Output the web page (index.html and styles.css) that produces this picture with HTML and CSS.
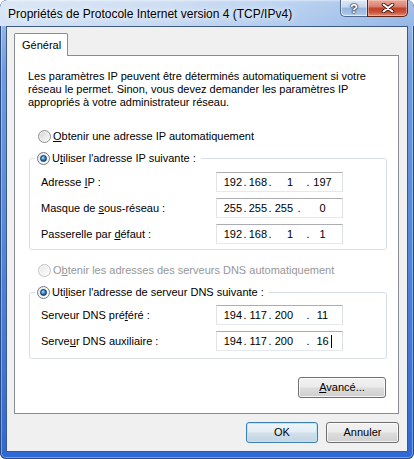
FILE: index.html
```html
<!DOCTYPE html>
<html lang="fr">
<head>
<meta charset="utf-8">
<title>Propriétés de Protocole Internet version 4 (TCP/IPv4)</title>
<link rel="stylesheet" href="styles.css">
</head>
<body>
<div class="window">
  <div class="titlebar">
    <div class="title">Propriétés de Protocole Internet version 4 (TCP/IPv4)</div>
    <div class="caption-btns">
      <div class="cbtn help">?</div>
      <div class="cbtn close">
        <svg width="14" height="10" viewBox="0 0 14 10">
          <path d="M2.5 1.5 L11.5 8.5 M11.5 1.5 L2.5 8.5" stroke="#3a1810" stroke-width="3.6" stroke-linecap="round" fill="none"/>
          <path d="M2.5 1.5 L11.5 8.5 M11.5 1.5 L2.5 8.5" stroke="#ffffff" stroke-width="2" stroke-linecap="round" fill="none"/>
        </svg>
      </div>
    </div>
  </div>
  <div class="client">
    <div class="tabs"><div class="tab">Général</div></div>
    <div class="panel">
      <p class="intro">Les paramètres IP peuvent être déterminés automatiquement si votre<br>réseau le permet. Sinon, vous devez demander les paramètres IP<br>appropriés à votre administrateur réseau.</p>

      <div class="radio-row top-radio"><span class="radio"></span><span class="rtext"><u>O</u>btenir une adresse IP automatiquement</span></div>

      <fieldset class="group g1">
        <legend class="radio-row"><span class="radio on"><span class="dot"></span></span><span class="rtext">U<u>t</u>iliser l'adresse IP suivante :</span></legend>
        <div class="field-row">
          <span class="label">Adresse <u>I</u>P :</span>
          <div class="ip"><span class="s s1">192</span><span class="d">.</span><span class="s s2">168</span><span class="d">.</span><span class="s s3">1</span><span class="d d3">.</span><span class="s4">197</span></div>
        </div>
        <div class="field-row">
          <span class="label">Masque de <u>s</u>ous-réseau :</span>
          <div class="ip alt"><span class="s s1">255</span><span class="d">.</span><span class="s s2">255</span><span class="d">.</span><span class="s s3">255</span><span class="d d3">.</span><span class="s4">0</span></div>
        </div>
        <div class="field-row">
          <span class="label">Passerelle par <u>d</u>éfaut :</span>
          <div class="ip"><span class="s s1">192</span><span class="d">.</span><span class="s s2">168</span><span class="d">.</span><span class="s s3">1</span><span class="d d3">.</span><span class="s4">1</span></div>
        </div>
      </fieldset>

      <div class="radio-row dns-radio disabled"><span class="radio"></span><span class="rtext">O<u>b</u>tenir les adresses des serveurs DNS automatiquement</span></div>

      <fieldset class="group g2">
        <legend class="radio-row"><span class="radio on"><span class="dot"></span></span><span class="rtext">Uti<u>l</u>iser l'adresse de serveur DNS suivante :</span></legend>
        <div class="field-row">
          <span class="label">Serveur DNS pré<u>f</u>éré :</span>
          <div class="ip"><span class="s s1">194</span><span class="d">.</span><span class="s s2">117</span><span class="d">.</span><span class="s s3">200</span><span class="d d3">.</span><span class="s4">11</span></div>
        </div>
        <div class="field-row">
          <span class="label">Serve<u>u</u>r DNS auxiliaire :</span>
          <div class="ip"><span class="s s1">194</span><span class="d">.</span><span class="s s2">117</span><span class="d">.</span><span class="s s3">200</span><span class="d d3">.</span><span class="s4">16</span><span class="caret"></span></div>
        </div>
      </fieldset>

      <div class="adv-row"><button class="btn adv"><u>A</u>vancé...</button></div>
    </div>
    <div class="footer">
      <button class="btn ok">OK</button>
      <button class="btn cancel">Annuler</button>
    </div>
  </div>
</div>
</body>
</html>
```

FILE: styles.css
```css
html, body {
  margin: 0;
  padding: 0;
  background: #ffffff;
}

body {
  font-family: "Liberation Sans", Arial, sans-serif;
  font-size: 11px;
  color: #000;
}

.window {
  width: 414px;
  height: 459px;
  box-sizing: border-box;
  padding: 0 6px 7px;
  border-radius: 7px 7px 6px 6px;
  background: linear-gradient(to bottom, #aac5ec 0px, #94b6e6 26px, #6f9ce0 70px, #4f85da 260px, #2f68d4 459px);
  box-shadow: inset 0 0 0 1px #2b4a82, inset 0 0 0 2px rgba(255, 255, 255, 0.35);
  display: flex;
  flex-direction: column;
  overflow: hidden;
}

/* ---------- Title bar ---------- */
.titlebar {
  height: 26px;
  flex: none;
  margin: 0 -6px;
  padding: 0 6px 0 8px;
  display: flex;
  align-items: flex-start;
  justify-content: space-between;
  border-radius: 7px 7px 0 0;
  background:
    linear-gradient(to bottom, rgba(255, 255, 255, 0.55) 0px, rgba(255, 255, 255, 0.15) 2px, rgba(255, 255, 255, 0) 26px),
    linear-gradient(to right, #d5e3f5 0%, #c6d9f1 40%, #b0cbee 70%, #95b6e5 100%);
}

.title {
  padding-top: 7px;
  font-size: 12px;
  line-height: 15px;
  color: #000;
  white-space: nowrap;
  text-shadow: 0 0 6px rgba(255, 255, 255, 0.95), 0 0 10px rgba(255, 255, 255, 0.8);
}

.caption-btns {
  display: flex;
}

.cbtn {
  height: 17px;
  box-sizing: border-box;
  display: flex;
  align-items: center;
  justify-content: center;
}

.help {
  width: 27px;
  border: 1px solid #4f6a92;
  border-top: none;
  border-right: none;
  border-radius: 0 0 0 5px;
  background: linear-gradient(to bottom, #dfe9f7 0%, #c3d5ee 45%, #97b4dc 50%, #a6c2e7 85%, #c6daf2 100%);
  box-shadow: inset 0 0 0 1px rgba(255, 255, 255, 0.5);
  color: #ffffff;
  font-weight: bold;
  font-size: 13px;
  line-height: 15px;
  text-shadow: 0 0 1px #1b2f52, 0 0 2px #1b2f52, 0 0 2px #1b2f52;
}

.close {
  width: 41px;
  border: 1px solid #5e2418;
  border-top: none;
  border-radius: 0 0 5px 0;
  background: linear-gradient(to bottom, #eaa99a 0%, #d98371 40%, #c2442a 52%, #c9503a 75%, #e2907a 100%);
  box-shadow: inset 0 0 0 1px rgba(255, 220, 210, 0.45);
}

.close svg {
  display: block;
}

/* ---------- Client area ---------- */
.client {
  flex: 1;
  background: #f0f0f0;
  border: 1px solid #3d5a86;
  padding: 6px 8px 8px 7px;
  display: flex;
  flex-direction: column;
}

.tabs {
  display: flex;
  height: 22px;
}

.tab {
  width: 54px;
  height: 23px;
  box-sizing: border-box;
  border: 1px solid #898c95;
  border-bottom: none;
  background: #ffffff;
  padding: 5px 0 0 7px;
  line-height: 13px;
  z-index: 1;
  border-radius: 2px 2px 0 0;
}

.panel {
  height: 359px;
  box-sizing: border-box;
  border: 1px solid #898c95;
  background: #ffffff;
  padding: 14px 11px 0 13px;
  display: flex;
  flex-direction: column;
}

.intro {
  margin: 0;
  line-height: 13px;
  white-space: nowrap;
}

/* ---------- Radios ---------- */
.radio-row {
  display: flex;
  align-items: center;
  height: 13px;
  line-height: 13px;
  white-space: nowrap;
}

.top-radio {
  margin-top: 21px;
  padding-left: 10px;
}

.dns-radio {
  margin-top: 14px;
  padding-left: 10px;
}

.radio {
  width: 13px;
  height: 13px;
  box-sizing: border-box;
  border-radius: 50%;
  border: 1px solid #8d8d8d;
  background: linear-gradient(135deg, #cfcfcf 0%, #e6e6e6 45%, #fbfbfb 100%);
  box-shadow: inset 0 0 0 1px rgba(255, 255, 255, 0.6);
  display: flex;
  align-items: center;
  justify-content: center;
  flex: none;
}

.radio.on {
  border-color: #6e7a8a;
  background: linear-gradient(135deg, #d7dde4 0%, #eef1f4 50%, #ffffff 100%);
}

.dot {
  width: 7px;
  height: 7px;
  box-sizing: border-box;
  border-radius: 50%;
  border: 1px solid #0f2d55;
  background: radial-gradient(circle at 40% 35%, #b6e2ff 0%, #4a9be0 35%, #14559f 75%, #0b3a75 100%);
}

.rtext {
  margin-left: 2px;
}

.disabled {
  color: #979797;
}

.disabled .radio {
  border-color: #c2c2c2;
  background: linear-gradient(135deg, #e6e6e6 0%, #f2f2f2 50%, #fcfcfc 100%);
}

/* ---------- Group boxes ---------- */
.group {
  margin: 9px 0 0 1px;
  border: 1px solid #d5dfe5;
  border-radius: 3px;
  padding: 7px 11px 5px 11px;
  min-width: 0;
  display: flex;
  flex-direction: column;
  gap: 6px;
}

.group legend {
  margin-left: -6px;
  padding: 0 5px 0 2px;
  height: 13px;
}

.g2 {
  padding-top: 6px;
  padding-bottom: 7px;
}

.field-row {
  display: flex;
  align-items: center;
  height: 20px;
}

.label {
  width: 175px;
  white-space: nowrap;
  flex: none;
}

.ip {
  width: 127px;
  height: 20px;
  box-sizing: border-box;
  border: 1px solid;
  border-color: #abadb3 #dbdfe6 #e3e9ef #e2e3ea;
  background: #ffffff;
  display: flex;
  align-items: center;
  line-height: 13px;
  white-space: nowrap;
}

.s {
  text-align: right;
  flex: none;
}

.s1 { width: 25px; }
.s2 { width: 19px; }
.s3 { width: 20px; }

.d {
  width: 6px;
  text-align: center;
  flex: none;
}

.d3 {
  margin-left: 12px;
}

.alt .d3 {
  margin-left: 3px;
}

.alt .s4 {
  margin-left: 9px;
}

.s4 {
  width: 23px;
  text-align: center;
  flex: none;
}

.caret {
  width: 1px;
  height: 13px;
  background: #000;
  margin-left: -3px;
  flex: none;
}

/* ---------- Buttons ---------- */
.btn {
  font-family: "Liberation Sans", Arial, sans-serif;
  font-size: 11px;
  color: #000;
  height: 21px;
  box-sizing: border-box;
  padding: 0;
  border: 1px solid #707070;
  border-radius: 3px;
  background: linear-gradient(to bottom, #f2f2f2 0%, #ebebeb 48%, #dddddd 52%, #cfcfcf 100%);
  box-shadow: inset 0 0 0 1px rgba(255, 255, 255, 0.75);
  line-height: 17px;
}

.adv-row {
  margin-top: 18px;
  display: flex;
  justify-content: flex-end;
  padding-right: 1px;
}

.adv {
  width: 88px;
}

.footer {
  margin-top: 8px;
  display: flex;
  justify-content: flex-end;
  gap: 8px;
}

.ok {
  width: 72px;
  border-color: #3c7fb1;
  background: linear-gradient(to bottom, #eef5fa 0%, #e3edf4 48%, #d2e0ea 52%, #c3d5e2 100%);
  box-shadow: inset 0 0 0 1px #bfe4f7;
}

.cancel {
  width: 73px;
}
```
